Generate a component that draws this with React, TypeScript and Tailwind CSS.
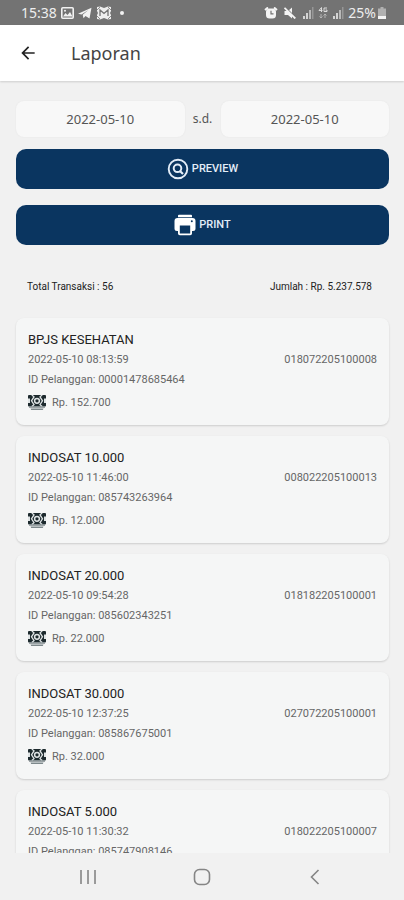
import { MdArrowBack } from "react-icons/md";

type Transaction = {
  name: string;
  date: string;
  code: string;
  customerId: string;
  price: string;
};

const transactions: Transaction[] = [
  {
    name: "BPJS KESEHATAN",
    date: "2022-05-10 08:13:59",
    code: "018072205100008",
    customerId: "00001478685464",
    price: "152.700",
  },
  {
    name: "INDOSAT 10.000",
    date: "2022-05-10 11:46:00",
    code: "008022205100013",
    customerId: "085743263964",
    price: "12.000",
  },
  {
    name: "INDOSAT 20.000",
    date: "2022-05-10 09:54:28",
    code: "018182205100001",
    customerId: "085602343251",
    price: "22.000",
  },
  {
    name: "INDOSAT 30.000",
    date: "2022-05-10 12:37:25",
    code: "027072205100001",
    customerId: "085867675001",
    price: "32.000",
  },
  {
    name: "INDOSAT 5.000",
    date: "2022-05-10 11:30:32",
    code: "018022205100007",
    customerId: "085747908146",
    price: "7.000",
  },
];

const SignalIcon = () => (
  <svg viewBox="0 0 12 12" className="h-3 w-3" fill="#fff">
    <path d="M1 9h2v3H1zM4 6h2v6H4z" opacity=".7" />
    <path d="M7 3h2v9H7z" opacity=".5" />
    <path d="M10 0h1.500v12H10z" opacity=".25" />
  </svg>
);

const StatusBar = () => (
  <div className="flex h-[25px] shrink-0 items-center justify-between bg-[#737373] pr-[18px] pl-[21px] text-sm text-[#eeeeee]">
    <div className="flex items-center gap-1">
      <span>15:38</span>
      <svg viewBox="0 0 13 12" className="h-3 w-[13px]">
        <rect x="0.800" y="0.800" width="11.400" height="10.400" rx="1" fill="none" stroke="#f2f2f2" strokeWidth="1.600" />
        <path d="M2 9.500l2.500-3.500 2 2L9 5l2.500 4.500z" fill="#f2f2f2" />
        <circle cx="4" cy="3.800" r="1" fill="#f2f2f2" />
      </svg>
      <svg viewBox="0 0 14 12" className="h-3 w-3.5" fill="#f2f2f2">
        <path d="M0 6.800L13.500.8 11.500 11.500 7.500 9l-2 2.300-.8-3.500L10.500 3 3.500 7.600z" />
      </svg>
      <svg viewBox="0 0 16 14" className="h-3.5 w-4">
        <path d="M1 1l3-.5L8 2l4-1.500 3 .5v4l-1 2 1 2v4l-3 .5L8 12l-4 1.500L1 13V9l1-2-1-2z" fill="#eeeeee" />
        <path d="M4 10V4l4 3.500L12 4v6" fill="none" stroke="#737373" strokeWidth="1.300" />
        <path d="M1 4l3-3M15 4l-3-3M1 10l3 3M15 10l-3 3" stroke="#8c8c8c" strokeWidth="1" />
      </svg>
      <span className="ml-1 h-1 w-1 rounded-full bg-[#f2f2f2]" />
    </div>
    <div className="flex items-center">
      <svg viewBox="0 0 14 12" className="mr-1.5 h-3 w-3.5">
        <path d="M1 3l3-2.500M13 3L10 .5" stroke="#f4f4f4" strokeWidth="2" />
        <rect x="2" y="1.500" width="10" height="10" rx="3.500" fill="#f4f4f4" />
        <path d="M7 3.800v3h2.500" fill="none" stroke="#737373" strokeWidth="1.200" />
      </svg>
      <svg viewBox="0 0 12 12" className="mr-1.5 h-3 w-3">
        <path d="M.5 4H4l4-3.500v11L4 8H.5z" fill="#f4f4f4" />
        <path d="M1.500 .5l10 10" stroke="#737373" strokeWidth="1.200" />
        <path d="M.5.800l10.800 10.700" stroke="#f4f4f4" strokeWidth="1.800" />
      </svg>
      <SignalIcon />
      <svg viewBox="0 0 10 12" className="mx-1 h-3 w-2.5" fill="none" stroke="#dcdcdc">
        <path d="M3.500 5V.5L1 3.500h3.500M9 1H6v3.500h3V3H7.500" />
        <path d="M3 7v4M1.500 9.500L3 11l1.500-1.500M7 11V7M5.500 8.500L7 7l1.500 1.500" stroke="#b5b5b5" />
      </svg>
      <SignalIcon />
      <span className="ml-1">25%</span>
      <svg viewBox="0 0 8 12" className="ml-0.5 h-3 w-2">
        <path d="M2.500 0h3v1.500H8V12H0V1.500h2.500z" fill="#b0b0b0" />
        <path d="M0 9h8v3H0z" fill="#f4f4f4" />
      </svg>
    </div>
  </div>
);

const PreviewIcon = () => (
  <svg viewBox="0 0 22 22" className="h-[22px] w-[22px]" fill="none" stroke="#e3edf8">
    <circle cx="11" cy="11" r="9.300" strokeWidth="1.900" />
    <circle cx="10.500" cy="10.300" r="3.800" strokeWidth="2" />
    <path d="M13 13l3 3" strokeWidth="2.200" />
  </svg>
);

const PrintIcon = () => (
  <svg viewBox="0 0 22 22" className="h-[22px] w-[22px]">
    <path d="M5 .800h12a1 1 0 0 1 1 1V3.200H4V1.800a1 1 0 0 1 1-1z" fill="#fff" />
    <path
      d="M3.500 4h15a3 3 0 0 1 3 3v7.500a2.500 2.500 0 0 1-2.500 2.500h-1v2.500a1.800 1.800 0 0 1-1.800 1.800H5.800A1.800 1.800 0 0 1 4 19.500V17H3A2.500 2.500 0 0 1 .5 14.500V7a3 3 0 0 1 3-3z"
      fill="#fff"
    />
    <path d="M5.800 11.500h10.400v8H5.800z" fill="#0a3560" />
    <circle cx="17.800" cy="7.300" r="1" fill="#0a3560" />
  </svg>
);

const CashIcon = () => (
  <svg viewBox="0 0 18 16" className="h-4 w-[18px]">
    <rect width="18" height="11.500" rx="1" fill="#1d2a2e" />
    <path d="M3.800 0L6 1.800 3.500 5.800 6 9.700 3.800 11.500M14.200 0L12 1.800l2.500 4L12 9.700l2.200 1.800" fill="none" stroke="#dfe4e5" strokeWidth="1.300" />
    <path d="M0 3.600h2v4.300H0M18 3.600h-2v4.300h2" fill="#dfe4e5" />
    <circle cx="9" cy="5.800" r="2.400" fill="none" stroke="#dfe4e5" strokeWidth="1.500" />
    <path d="M1 11.500h16v1.300H1zM2.500 13.500h13l-.7 1.500H3.200z" fill="#7d888b" />
  </svg>
);

const TransactionCard = ({ item }: { item: Transaction }) => (
  <li className="h-[107px] rounded-lg bg-[#f5f6f6] px-3 pt-3 shadow-[0_1px_2px_rgba(0,0,0,0.15)]">
    <h2 className="text-[13px] leading-5 text-[#222222]">{item.name}</h2>
    <div className="flex justify-between">
      <span>{item.date}</span>
      <span>{item.code}</span>
    </div>
    <p>ID Pelanggan: {item.customerId}</p>
    <div className="mt-[3px] flex items-center gap-1.5">
      <CashIcon />
      <span>Rp. {item.price}</span>
    </div>
  </li>
);

const inputStyle =
  "h-9 w-full min-w-0 flex-1 rounded-lg bg-[#f8f8f8] text-center text-[13px] text-[#555555] shadow-[0_0_2px_rgba(0,0,0,0.06)] outline-none";
const buttonStyle =
  "flex h-10 w-full items-center justify-center gap-[3px] rounded-[10px] bg-[#0a3560] font-[Roboto,sans-serif] text-[11px] font-medium text-[#e3edf8]";

const App = () => {
  return (
    <div className="flex h-screen flex-col bg-[#f1f1f1] font-['Noto_Sans','Open_Sans',sans-serif]">
      <StatusBar />
      <header className="flex h-14 shrink-0 items-center gap-[33px] bg-white px-[18px] shadow-[0_1px_2px_rgba(0,0,0,0.15)]">
        <button aria-label="Kembali">
          <MdArrowBack className="h-5 w-5 text-[#222222]" />
        </button>
        <h1 className="text-lg text-[#444444]">Laporan</h1>
      </header>

      <main className="min-h-0 flex-1 overflow-y-auto pt-5 pr-[15px] pl-4 [scrollbar-width:none]">
        <div className="flex items-center">
          <input aria-label="Tanggal awal" defaultValue="2022-05-10" className={inputStyle} />
          <span className="w-9 shrink-0 text-center text-xs text-[#555555]">s.d.</span>
          <input aria-label="Tanggal akhir" defaultValue="2022-05-10" className={inputStyle} />
        </div>
        <div className="mt-3 flex flex-col gap-4">
          <button className={buttonStyle}>
            <PreviewIcon />
            PREVIEW
          </button>
          <button className={buttonStyle}>
            <PrintIcon />
            PRINT
          </button>
        </div>

        <div className="mt-8 flex justify-between pr-[17px] pl-[11px] font-[Roboto,sans-serif] text-[10px] leading-5 text-[#222222]">
          <span>Total Transaksi : 56</span>
          <span>Jumlah : Rp. 5.237.578</span>
        </div>

        <ul className="mt-[21px] flex flex-col gap-[11px] pb-4 font-[Roboto,sans-serif] text-[11px] leading-5 text-[#666666]">
          {transactions.map((item) => (
            <TransactionCard key={item.code} item={item} />
          ))}
        </ul>
      </main>

      <nav className="flex h-[47px] shrink-0 items-center justify-between px-20 text-[#858585]">
        <button aria-label="Aplikasi terbaru">
          <svg viewBox="0 0 16 16" className="h-4 w-4" fill="none" stroke="currentColor" strokeWidth="1.600">
            <path d="M1 1v14M8 1v14M15 1v14" />
          </svg>
        </button>
        <button aria-label="Beranda">
          <svg viewBox="0 0 18 18" className="h-[18px] w-[18px]" fill="none" stroke="currentColor" strokeWidth="1.600">
            <rect x="1.500" y="1.500" width="15" height="15" rx="5" />
          </svg>
        </button>
        <button aria-label="Kembali ke sebelumnya">
          <svg viewBox="0 0 16 16" className="h-4 w-4" fill="none" stroke="currentColor" strokeWidth="1.600">
            <path d="M10.500 1l-7 7 7 7" />
          </svg>
        </button>
      </nav>
    </div>
  );
};

export default App;
